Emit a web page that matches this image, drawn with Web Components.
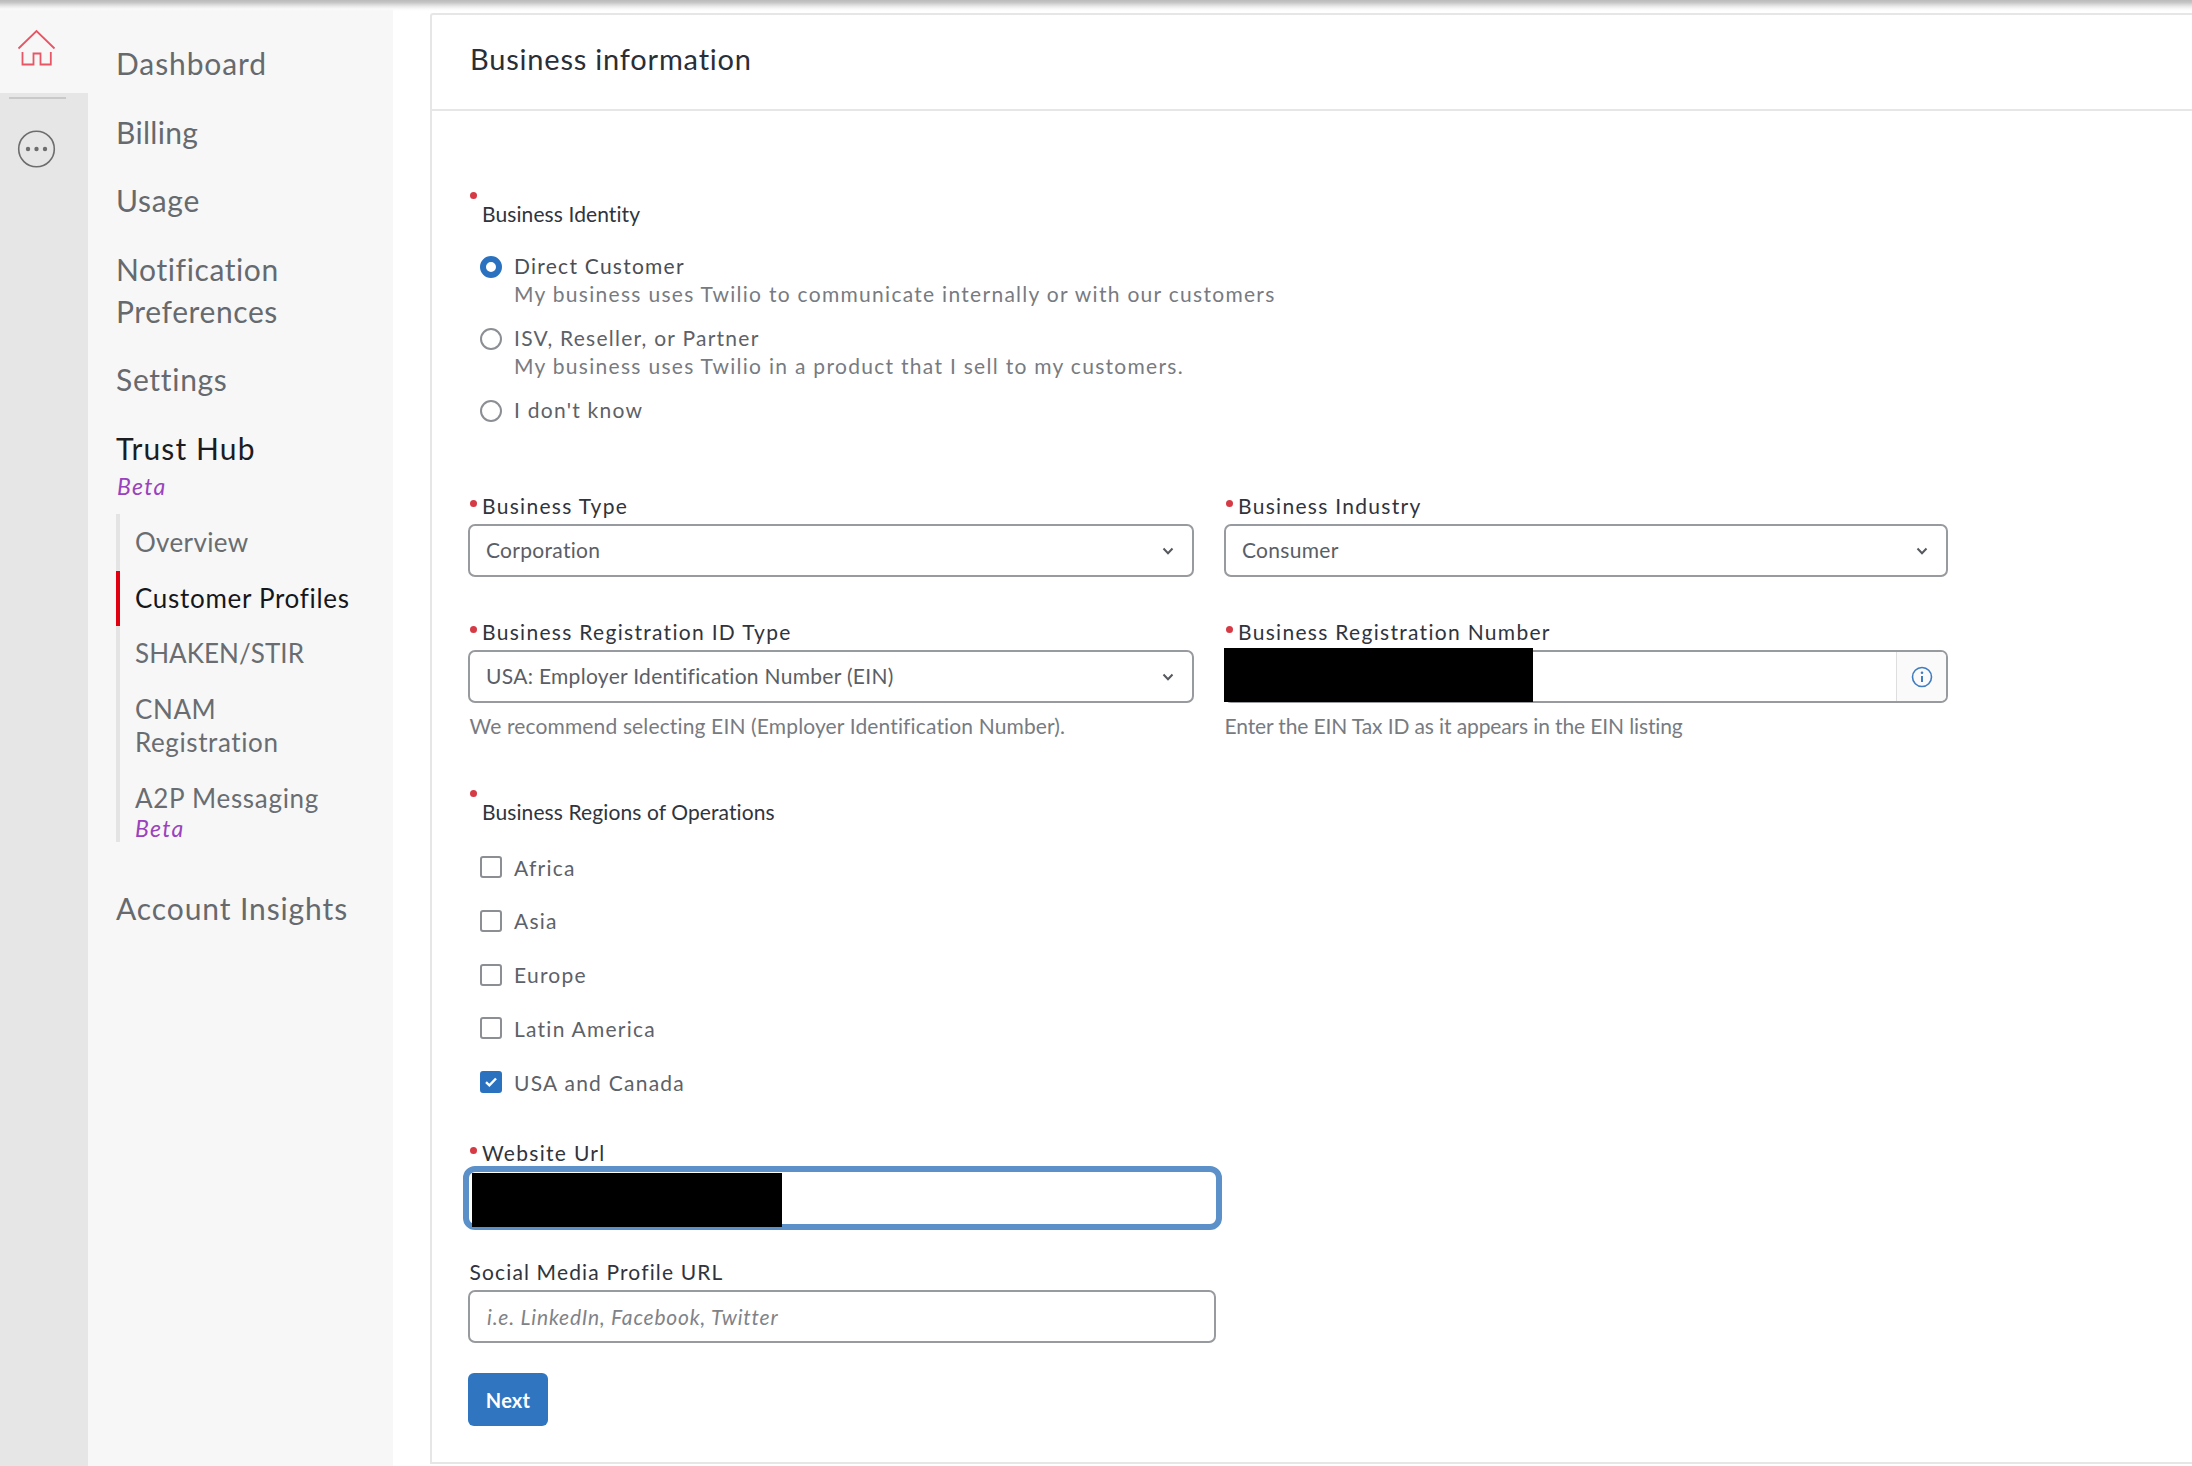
<!DOCTYPE html>
<html><head><meta charset="utf-8">
<style>
html,body{margin:0;padding:0;height:1466px;overflow:hidden;background:#fff;font-family:Lato,"Liberation Sans",sans-serif}
</style></head><body>
<tw-app>
  <tw-rail slot="rail"></tw-rail>
  <tw-nav slot="nav">
    <nav-item>Dashboard</nav-item>
    <nav-item style="letter-spacing:.3px">Billing</nav-item>
    <nav-item style="letter-spacing:.7px">Usage</nav-item>
    <nav-item style="letter-spacing:.6px">Notification<br>Preferences</nav-item>
    <nav-item style="letter-spacing:.7px">Settings</nav-item>
    <nav-item active beta style="letter-spacing:1.100px">Trust Hub</nav-item>
    <nav-group>
      <sub-item style="letter-spacing:.35px">Overview</sub-item>
      <sub-item active style="letter-spacing:.7px">Customer Profiles</sub-item>
      <sub-item style="letter-spacing:.05px">SHAKEN/STIR</sub-item>
      <sub-item>CNAM<br>Registration</sub-item>
      <sub-item beta style="letter-spacing:.7px">A2P Messaging</sub-item>
    </nav-group>
    <nav-item last>Account Insights</nav-item>
  </tw-nav>
  <form-card heading="Business information" slot="main">
    <req-label stacked>Business Identity</req-label>
    <radio-group>
      <radio-row checked desc="My business uses Twilio to communicate internally or with our customers">Direct Customer</radio-row>
      <radio-row desc="My business uses Twilio in a product that I sell to my customers.">ISV, Reseller, or Partner</radio-row>
      <radio-row>I don't know</radio-row>
    </radio-group>
    <field-grid>
      <form-field label="Business Type" required><select-box>Corporation</select-box></form-field>
      <form-field label="Business Industry" required><select-box>Consumer</select-box></form-field>
      <form-field label="Business Registration ID Type" required help="We recommend selecting EIN (Employer Identification Number)."><select-box>USA: Employer Identification Number (EIN)</select-box></form-field>
      <form-field class="ein" label="Business Registration Number" required help="Enter the EIN Tax ID as it appears in the EIN listing"><text-box info redact></text-box></form-field>
    </field-grid>
    <req-label stacked regions>Business Regions of Operations</req-label>
    <check-group>
      <check-row>Africa</check-row>
      <check-row>Asia</check-row>
      <check-row>Europe</check-row>
      <check-row>Latin America</check-row>
      <check-row checked>USA and Canada</check-row>
    </check-group>
    <form-field class="web" label="Website Url" required><text-box focused redact></text-box></form-field>
    <form-field class="soc" label="Social Media Profile URL"><text-box placeholder="i.e. LinkedIn, Facebook, Twitter"></text-box></form-field>
    <tw-button>Next</tw-button>
  </form-card>
</tw-app>
<script>
const def=(name,html,init)=>customElements.define(name,class extends HTMLElement{
  connectedCallback(){ if(this.shadowRoot)return; const s=this.attachShadow({mode:'open'}); s.innerHTML=typeof html==='function'?html(this):html; if(init)init(this,s);}
});
def('tw-app',`<style>
:host{display:block;position:relative;width:2192px;height:1466px;overflow:hidden}
.top{position:absolute;left:0;right:0;top:0;height:11px;z-index:2;background:linear-gradient(#bababa,#c6c6c6 2.500px,#e6e6e6 6px,#fafafa 9px,rgba(255,255,255,0))}
.cols{display:flex;height:1466px}
.main{flex:1;min-width:0;padding:13px 0 0 37px;box-sizing:border-box}
</style><div class="top"></div><div class="cols"><slot name="rail"></slot><slot name="nav"></slot><div class="main"><slot name="main"></slot></div></div>`);
def('tw-rail',`<style>
:host{display:flex;flex-direction:column;width:88px;flex:none;background:#e6e6e6}
.home{height:93px;background:#f7f7f7;display:flex;}
svg{display:block}
.div{height:2px;background:#c9c9c9;margin:4px 22px 0 9px}
</style><div class="home"><svg width="88" height="93" viewBox="0 0 88 93" fill="none" stroke="#e85565" stroke-width="1.800"><path d="M18.500 48.500 36.500 31 54.500 48.500"/><path d="M22.500 52V64.500H33.500V53.500H40.500V64.500H50.800V52"/></svg></div>
<div class="div"></div>
<svg width="88" height="80" viewBox="0 0 88 80" fill="none"><circle cx="36.500" cy="50" r="17.800" stroke="#6d6d6d" stroke-width="1.600"/><g fill="#6d6d6d"><circle cx="28" cy="50" r="2.200"/><circle cx="36.500" cy="50" r="2.200"/><circle cx="45" cy="50" r="2.200"/></g></svg>`);
def('tw-nav',`<style>
:host{display:block;width:305px;flex:none;background:#f7f7f7;padding:42px 0 0 28px;box-sizing:border-box;height:1466px}
</style><slot></slot>`);
def('nav-item',el=>`<style>
:host{display:block;margin-bottom:26.500px;font-size:30px;line-height:42px;color:#666a6e;letter-spacing:.9px}
:host([active]){color:#1b1d22;margin-bottom:0}
:host([last]){margin-top:45px}
.b{display:block;margin-top:2.500px;padding-left:1px;font-size:23px;line-height:30px;font-style:italic;color:#9a42bd;letter-spacing:1.300px}
</style><slot></slot>${el.hasAttribute('beta')?'<span class="b">Beta</span>':''}`);
def('nav-group',`<style>
:host{display:block;margin:13px 0 0 0;padding-top:1px;border-left:4px solid #e4e4e4;width:260px;height:328px;box-sizing:border-box}
</style><slot></slot>`);
def('sub-item',el=>`<style>
:host{display:block;position:relative;padding:11.300px 0 11.300px 15px;font-size:26px;line-height:33px;color:#696d71;letter-spacing:.6px;}
:host([active]){color:#15171c}
:host([active])::before{content:"";position:absolute;left:-4px;top:0;bottom:0;width:4px;background:#e0000f}
:host([beta]){padding-bottom:0}
.b{display:block;font-size:23px;line-height:27px;font-style:italic;color:#9a42bd;letter-spacing:1.300px}
</style><slot></slot>${el.hasAttribute('beta')?'<span class="b">Beta</span>':''}`);
def('form-card',el=>`<style>
:host{display:block;background:#fff;border:2px solid #e6e6e6;border-right:0;height:1451px;box-sizing:border-box;border-top-left-radius:3px}
header{height:94px;border-bottom:2px solid #e6e6e6;padding-left:38px;font-size:29px;line-height:88px;color:#2a2e37;letter-spacing:.8px}
.body{padding:81px 0 0 36px}
</style><header>${el.getAttribute('heading')}</header><div class="body"><slot></slot></div>`);
def('req-label',`<style>
:host{display:block;position:relative;font-size:21px;line-height:26px;color:#30343c;padding:9px 0 0 14px;letter-spacing:.1px}
:host([regions]){margin-top:51px}
.d{position:absolute;left:2px;top:0;width:7px;height:7px;border-radius:50%;background:#d63a45}
</style><span class="d"></span><slot></slot>`);
def('radio-group',`<style>:host{display:flex;flex-direction:column;gap:16.300px;margin:24.500px 0 69px 12px}</style><slot></slot>`);
def('radio-row',el=>`<style>
:host{display:grid;grid-template-columns:22px 1fr;column-gap:12px;font-size:21px;line-height:28px;color:#5d6168;letter-spacing:1.250px}
.r{width:22px;height:22px;box-sizing:border-box;border-radius:50%;border:2px solid #8b8e93;background:#fff;margin-top:4px}
:host([checked]) .r{border:6px solid #2a72bf}
.d{grid-column:2;color:#777b81;letter-spacing:1.290px}
:host([checked]) .t{color:#4a4e55}
</style><span class="r"></span><span class="t"><slot></slot></span>${el.getAttribute('desc')?`<span class="d">${el.getAttribute('desc')}</span>`:''}`);
def('field-grid',`<style>:host{display:grid;grid-template-columns:726px 724px;column-gap:30px;row-gap:42px}</style><slot></slot>`);
def('form-field',el=>`<style>
:host{display:block;position:relative}
:host(.web){margin-top:44px}
:host(.soc){margin-top:29px}
.l{display:block;font-size:21px;line-height:26px;color:#30343c;letter-spacing:1.300px;margin-bottom:5px;padding-left:14px;position:relative}
:host(.web) .l{margin-bottom:0}
.l.n{padding-left:1.500px;letter-spacing:1.150px}
.d{position:absolute;left:2px;top:7px;width:7px;height:7px;border-radius:50%;background:#d63a45}
.h{font-size:21px;line-height:26px;color:#777b81;margin-top:10px;padding-left:1.500px;letter-spacing:.14px}
:host(.ein) .h{padding-left:.5px;letter-spacing:-.12px}
</style><span class="l ${el.hasAttribute('required')?'':'n'}">${el.hasAttribute('required')?'<span class="d"></span>':''}${el.getAttribute('label')}</span><slot></slot>${el.getAttribute('help')?`<div class="h">${el.getAttribute('help')}</div>`:''}`);
def('select-box',`<style>
:host{display:flex;align-items:center;height:53px;box-sizing:border-box;border:2px solid #979a9e;border-radius:7px;background:#fff;padding:0 16px;font-size:21px;color:#5a5e65;letter-spacing:.3px}
.t{flex:1;position:relative;top:-1px}
svg{display:block;margin-right:2px}
</style><span class="t"><slot></slot></span><svg width="12" height="8" viewBox="0 0 12 8" fill="none" stroke="#55585e" stroke-width="2"><path d="M1.500 1.500 6 6.200 10.500 1.500"/></svg>`);
def('text-box',el=>`<style>
:host{display:flex;position:relative;height:53px;box-sizing:border-box;border:2px solid #979a9e;border-radius:7px;background:#fff;font-size:21px;color:#777b81}
:host([focused]){height:64px;border:6.500px solid #5b90c8;border-radius:12px;margin:0 0 0 -5.500px;width:759px}
:host([placeholder]){width:748px;align-items:center;padding-left:17px;font-style:italic;letter-spacing:.8px;color:#7f8388}
.x{position:absolute;background:#000;left:-2px;top:-4px;width:309px;height:54px}
:host([focused]) .x{left:3.500px;top:.5px;width:310px;height:54px}
.i{margin-left:auto;width:50px;box-sizing:border-box;border-left:1px solid #dedede;background:#fafafa;border-radius:0 5px 5px 0;display:flex;align-items:center;justify-content:center}
</style>${el.getAttribute('placeholder')||''}${el.hasAttribute('redact')?'<span class="x"></span>':''}${el.hasAttribute('info')?`<span class="i"><svg width="22" height="22" viewBox="0 0 22 22" fill="none"><circle cx="11" cy="11" r="9.500" stroke="#3f7cc0" stroke-width="1.600"/><path d="M11 10v6" stroke="#3f7cc0" stroke-width="2"/><circle cx="11" cy="6.800" r="1.300" fill="#3f7cc0"/></svg></span>`:''}`);
def('check-group',`<style>:host{display:flex;flex-direction:column;gap:25.750px;margin:28px 0 0 12px}</style><slot></slot>`);
def('check-row',`<style>
:host{display:flex;align-items:center;gap:12px;height:28px;font-size:21px;color:#5d6168;letter-spacing:1.250px}
.c{width:22px;height:22px;box-sizing:border-box;border:2px solid #8b8e93;border-radius:3px;background:#fff;display:flex;align-items:center;justify-content:center}
:host([checked]) .c{background:#2a72bf;border-color:#2a72bf}
svg{display:none}
:host([checked]) svg{display:block}
</style><span class="c"><svg width="14" height="12" viewBox="0 0 14 12" fill="none" stroke="#fff" stroke-width="2.400"><path d="M2 6.200 5.400 9.400 12 2.500"/></svg></span><span><slot></slot></span>`);
def('tw-button',`<style>
:host{display:inline-flex;align-items:center;justify-content:center;width:80px;height:53px;margin-top:30px;border-radius:6px;background:#2f75c0;color:#fff;font-size:20px;font-weight:700;letter-spacing:.2px}
</style><slot></slot>`);
</script>
</body></html>
